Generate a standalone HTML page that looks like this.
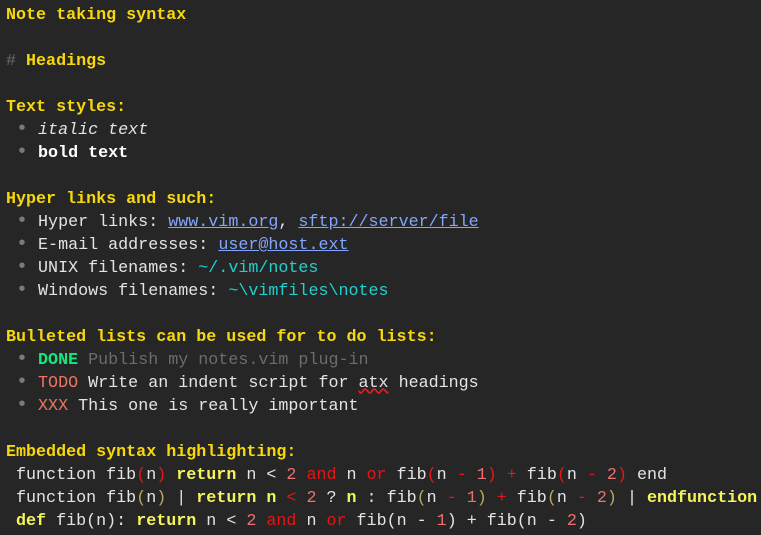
<!DOCTYPE html>
<html><head><meta charset="utf-8"><style>
html,body{margin:0;padding:0;background:#262626;width:761px;height:535px;overflow:hidden}
pre{margin:0;padding:4px 0 0 6px;font-family:"Liberation Mono",monospace;font-size:16.7px;line-height:23px;color:#e4e4e4}
.y{color:#f7d80c;font-weight:bold}
.g{color:#6c6c6c}
.b{color:#7a7a7a;font-size:20px;line-height:0}
.i{font-style:italic}
.w{font-weight:bold;color:#fff}
.l{color:#82a6ff;text-decoration:underline}
.c{color:#20d0d0}
.d{color:#14e87c;font-weight:bold}
.t{color:#f07560}
.k{color:#f4f45c;font-weight:bold}
.r{color:#e81414}
.n{color:#ee7070}
.o{color:#b8a868}
.s{text-decoration:underline wavy #e02020}
</style></head><body><pre><span class="y">Note taking syntax</span>

<span class="g">#</span> <span class="y">Headings</span>

<span class="y">Text styles:</span>
 <span class="b">•</span> <span class="i">italic text</span>
 <span class="b">•</span> <span class="w">bold text</span>

<span class="y">Hyper links and such:</span>
 <span class="b">•</span> Hyper links: <span class="l">www.vim.org</span>, <span class="l">sftp://server/file</span>
 <span class="b">•</span> E-mail addresses: <span class="l">user@host.ext</span>
 <span class="b">•</span> UNIX filenames: <span class="c">~/.vim/notes</span>
 <span class="b">•</span> Windows filenames: <span class="c">~\vimfiles\notes</span>

<span class="y">Bulleted lists can be used for to do lists:</span>
 <span class="b">•</span> <span class="d">DONE</span> <span class="g">Publish my notes.vim plug-in</span>
 <span class="b">•</span> <span class="t">TODO</span> Write an indent script for <span class="s">atx</span> headings
 <span class="b">•</span> <span class="t">XXX</span> This one is really important

<span class="y">Embedded syntax highlighting:</span>
 function fib<span class="r">(</span>n<span class="r">)</span> <span class="k">return</span> n &lt; <span class="n">2</span> <span class="r">and</span> n <span class="r">or</span> fib<span class="r">(</span>n <span class="r">-</span> <span class="n">1</span><span class="r">)</span> <span class="r">+</span> fib<span class="r">(</span>n <span class="r">-</span> <span class="n">2</span><span class="r">)</span> end
 function fib<span class="o">(</span>n<span class="o">)</span> | <span class="k">return n</span> <span class="r">&lt;</span> <span class="n">2</span> ? <span class="k">n</span> : fib<span class="o">(</span>n <span class="r">-</span> <span class="n">1</span><span class="o">)</span> <span class="r">+</span> fib<span class="o">(</span>n <span class="r">-</span> <span class="n">2</span><span class="o">)</span> | <span class="k">endfunction</span>
 <span class="k">def</span> fib(n): <span class="k">return</span> n &lt; <span class="n">2</span> <span class="r">and</span> n <span class="r">or</span> fib(n - <span class="n">1</span>) + fib(n - <span class="n">2</span>)
</pre></body></html>
